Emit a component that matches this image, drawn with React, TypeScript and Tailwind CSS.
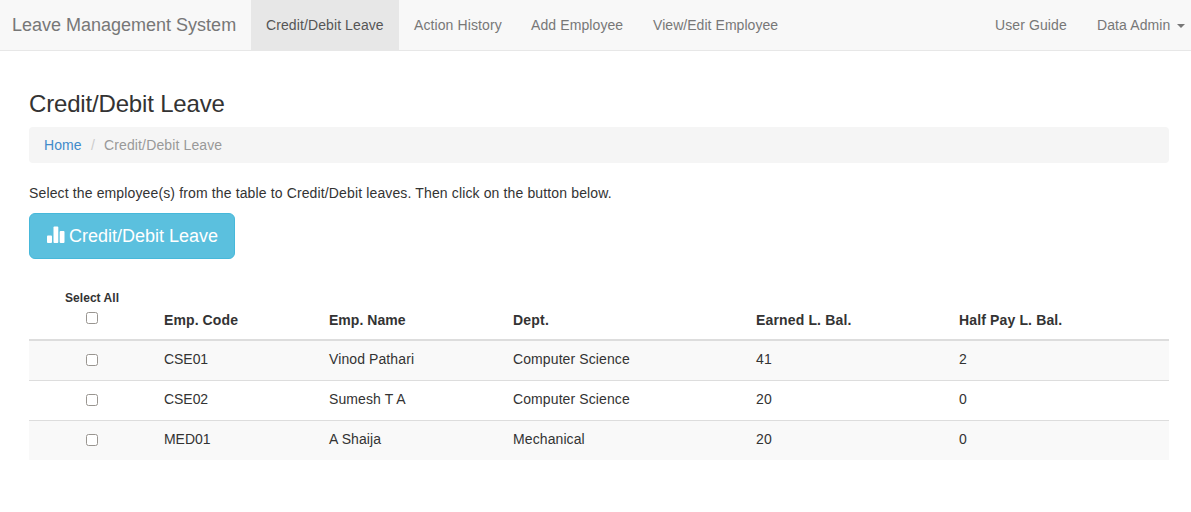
const rows = [
  ["CSE01", "Vinod Pathari", "Computer Science", "41", "2"],
  ["CSE02", "Sumesh T A", "Computer Science", "20", "0"],
  ["MED01", "A Shaija", "Mechanical", "20", "0"],
];

const Box = () => (
  <span className="block h-[12px] w-[12px] rounded-[2.5px] border border-[#999590] bg-white" />
);

export default function App() {
  return (
    <div className="h-[512px] overflow-hidden bg-white font-['Liberation_Sans',Arial,sans-serif] text-[14px] leading-[20px] tracking-[0.1px] text-[#333]">
      <nav className="flex h-[51px] border-b border-[#e7e7e7] bg-[#f8f8f8] text-[#777]">
        <a className="w-[251px] pl-3 pt-[15px] text-[18px] tracking-normal whitespace-nowrap">Leave Management System</a>
        <a className="w-[148px] bg-[#e7e7e7] pl-[15px] pt-[15px] text-[#555]">Credit/Debit Leave</a>
        <a className="w-[117px] pl-[15px] pt-[15px]">Action History</a>
        <a className="w-[122px] pl-[15px] pt-[15px]">Add Employee</a>
        <a className="pl-[15px] pt-[15px] tracking-[0.05px]">View/Edit Employee</a>
        <a className="ml-auto w-[102px] pt-[15px]">User Guide</a>
        <a className="flex w-[94px] pt-[15px] whitespace-nowrap">
          <span className="w-[80px]">Data Admin</span>
          <span className="mt-[9px] h-0 w-0 border-x-4 border-t-4 border-x-transparent border-t-[#777]" />
        </a>
      </nav>
      <main className="pl-[29px] pr-[22px]">
        <h1 className="pt-[40px] text-[24px] leading-[26px] tracking-[-0.17px]">Credit/Debit Leave</h1>
        <div className="mt-[10px] flex h-[36px] rounded-[4px] bg-[#f5f5f5] px-[15px] pt-2">
          <a className="w-[38px] text-[#428bca]">Home</a>
          <span className="w-[22px] pl-[9px] text-[#ccc]">/</span>
          <span className="tracking-[0.13px] text-[#999]">Credit/Debit Leave</span>
        </div>
        <p className="mt-[20px] tracking-[0.135px]">Select the employee(s) from the table to Credit/Debit leaves. Then click on the button below.</p>
        <button className="mt-[10px] flex h-[46px] w-[206px] rounded-[6px] border border-[#46b8da] bg-[#5bc0de] pl-[17px] pt-[9px] text-[18px] leading-[26px] tracking-normal whitespace-nowrap text-white">
          <svg className="mt-[3px] mr-[4px] h-[18px] w-[18px]" viewBox="0 0 18 18" fill="currentColor">
            <rect x="0" y="9.5" width="5" height="7.5" rx=".9" />
            <rect x="6.5" y="0.5" width="4.8" height="16.5" rx=".9" />
            <rect x="12.7" y="5" width="4.8" height="12" rx=".9" />
          </svg>
          Credit/Debit Leave
        </button>
        <div className="mt-[20px]">
          <div className="grid h-[62px] grid-cols-[135px_165px_184px_243px_203px_1fr] border-b-2 border-[#ddd] pt-[31px] font-bold">
            <div className="-mt-[22px] flex flex-col pl-[36px] text-[12px] tracking-[0.05px]">
              Select All
              <span className="mt-[4px] ml-[21px]"><Box /></span>
            </div>
            <div>Emp. Code</div>
            <div className="tracking-[0.03px]">Emp. Name</div>
            <div className="tracking-[0.2px]">Dept.</div>
            <div className="tracking-[0.15px]">Earned L. Bal.</div>
            <div className="tracking-[0.14px]">Half Pay L. Bal.</div>
          </div>
          {rows.map((r, i) => (
            <div key={r[0]} className={"grid grid-cols-[135px_165px_184px_243px_203px_1fr] pt-2 " + (i === 0 ? "h-[39px] bg-[#f9f9f9]" : i === 1 ? "h-[40px] border-t border-[#ddd]" : "h-[40px] border-t border-[#ddd] bg-[#f9f9f9]")}>
              <div className="pt-[5px] pl-[57px]"><Box /></div>
              {r.map((c, j) => <div key={j} className={j === 0 ? "tracking-[-0.05px]" : ""}>{c}</div>)}
            </div>
          ))}
        </div>
      </main>
    </div>
  );
}
